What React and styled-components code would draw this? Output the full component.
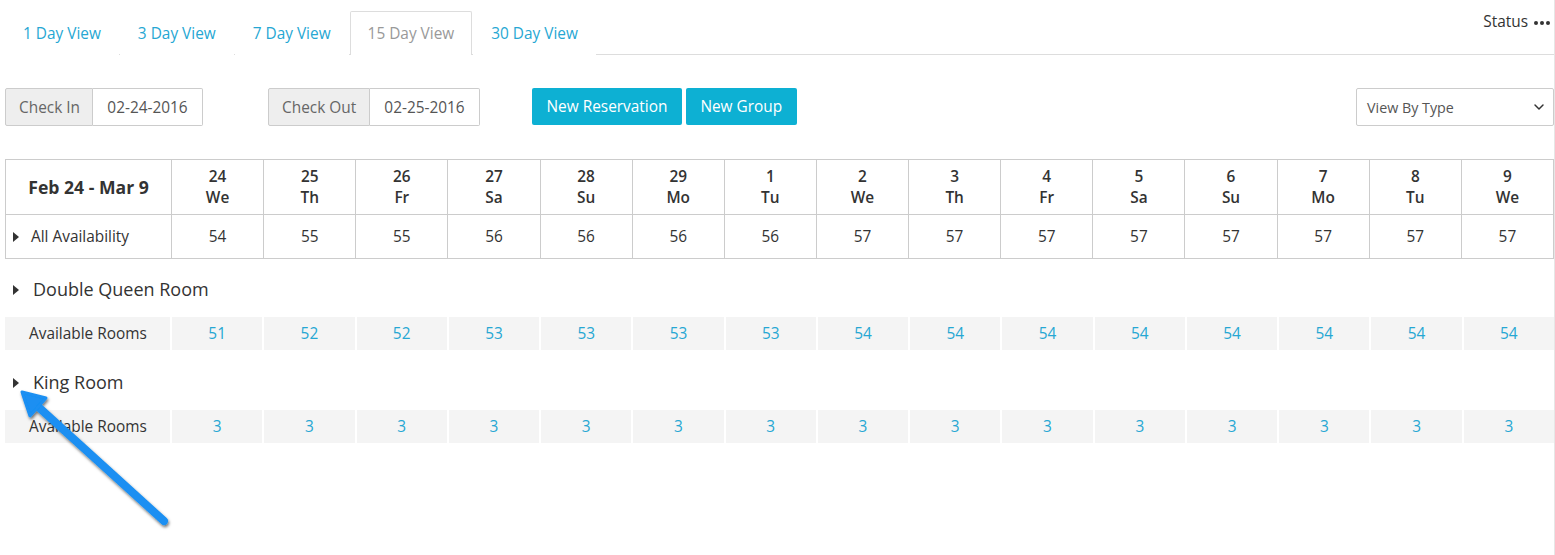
import React, { useState } from 'react';
import styled, { createGlobalStyle } from 'styled-components';
import { ChevronDown } from 'lucide-react';

const GlobalStyle = createGlobalStyle`
  html, body {
    margin: 0;
    padding: 0;
    background: #fff;
  }
  body {
    font-family: "Open Sans", "Liberation Sans", sans-serif;
    font-size: 15.4px;
    color: #333;
  }
`;

const days = [
  { d: 24, w: 'We', all: 54, dq: 51, k: 3 },
  { d: 25, w: 'Th', all: 55, dq: 52, k: 3 },
  { d: 26, w: 'Fr', all: 55, dq: 52, k: 3 },
  { d: 27, w: 'Sa', all: 56, dq: 53, k: 3 },
  { d: 28, w: 'Su', all: 56, dq: 53, k: 3 },
  { d: 29, w: 'Mo', all: 56, dq: 53, k: 3 },
  { d: 1, w: 'Tu', all: 56, dq: 53, k: 3 },
  { d: 2, w: 'We', all: 57, dq: 54, k: 3 },
  { d: 3, w: 'Th', all: 57, dq: 54, k: 3 },
  { d: 4, w: 'Fr', all: 57, dq: 54, k: 3 },
  { d: 5, w: 'Sa', all: 57, dq: 54, k: 3 },
  { d: 6, w: 'Su', all: 57, dq: 54, k: 3 },
  { d: 7, w: 'Mo', all: 57, dq: 54, k: 3 },
  { d: 8, w: 'Tu', all: 57, dq: 54, k: 3 },
  { d: 9, w: 'We', all: 57, dq: 54, k: 3 },
];

const tabs = ['1 Day View', '3 Day View', '7 Day View', '15 Day View', '30 Day View'];

const Page = styled.div`
  position: relative;
  width: 1555px;
  height: 555px;
  box-sizing: border-box;
  border-right: 1px solid #e6e6e6;
  padding: 11px 0 0 5px;
  overflow: hidden;
`;

const TabBar = styled.div`
  display: flex;
  align-items: flex-end;
  border-bottom: 1px solid #ddd;
  height: 43px;
`;

const Tab = styled.div`
  height: 44px;
  box-sizing: border-box;
  padding: 0 17px;
  margin-right: 1px;
  margin-bottom: -1px;
  display: flex;
  align-items: center;
  font-size: 15.4px;
  cursor: pointer;
  color: ${(p) => (p.active ? '#999' : '#26a7d3')};
  border: 1px solid ${(p) => (p.active ? '#ddd' : 'transparent')};
  border-bottom: none;
  background: #fff;
  border-radius: 2px 2px 0 0;
`;

const StatusMenu = styled.div`
  margin-left: auto;
  align-self: flex-start;
  display: flex;
  align-items: center;
  gap: 6px;
  font-size: 15.4px;
  color: #333;
  padding-right: 4px;
`;

const Dots = styled.span`
  display: flex;
  gap: 2px;
  margin-top: 2px;
`;

const Dot = styled.span`
  width: 4px;
  height: 4px;
  border-radius: 50%;
  background: #333;
`;

const Toolbar = styled.div`
  display: flex;
  align-items: center;
  margin-top: 33px;
  height: 38px;
`;

const InputGroup = styled.div`
  display: flex;
  height: 38px;
  margin-right: ${(p) => p.gap}px;
`;

const Addon = styled.div`
  display: flex;
  align-items: center;
  box-sizing: border-box;
  width: ${(p) => p.w}px;
  padding-left: 13px;
  background: #eee;
  border: 1px solid #ccc;
  border-radius: 2px 0 0 2px;
  color: #666;
  font-size: 15.4px;
`;

const DateInput = styled.div`
  display: flex;
  align-items: center;
  justify-content: center;
  box-sizing: border-box;
  width: 110px;
  border: 1px solid #ccc;
  border-left: none;
  border-radius: 0 2px 2px 0;
  color: #555;
  font-size: 15.4px;
`;

const PrimaryButton = styled.button`
  height: 37px;
  margin-top: -1px;
  padding: 0 14.5px;
  margin-right: 4px;
  border: none;
  border-radius: 2px;
  background: #0db0d3;
  color: #fff;
  font-family: inherit;
  font-size: 15.4px;
  cursor: pointer;
`;

const SelectBox = styled.div`
  margin-left: auto;
  width: 198px;
  height: 38px;
  box-sizing: border-box;
  border: 1px solid #ccc;
  border-radius: 2px;
  display: flex;
  align-items: center;
  justify-content: space-between;
  padding: 0 6px 0 10px;
  font-size: 14.3px;
  color: #555;
`;

const GRID = '165px repeat(15, 1fr)';

const SummaryGrid = styled.div`
  display: grid;
  grid-template-columns: ${GRID};
  gap: 1px;
  background: #ccc;
  border: 1px solid #ccc;
  margin-top: 33px;
`;

const HeadCell = styled.div`
  background: #fff;
  height: 54px;
  display: flex;
  flex-direction: column;
  align-items: center;
  justify-content: center;
  font-size: 15.4px;
  font-weight: 600;
  line-height: 21px;
  color: #333;
`;

const RangeCell = styled(HeadCell)`
  font-size: 17.6px;
  font-weight: 700;
`;

const BodyCell = styled.div`
  background: #fff;
  height: 43px;
  display: flex;
  align-items: center;
  justify-content: ${(p) => (p.left ? 'flex-start' : 'center')};
  padding-left: ${(p) => (p.left ? '7px' : '0')};
  gap: 12px;
  font-size: 15.4px;
  color: #333;
`;

const Caret = styled.span`
  width: 0;
  height: 0;
  border-top: 5px solid transparent;
  border-bottom: 5px solid transparent;
  border-left: 6px solid #333;
  display: inline-block;
  margin-top: 1px;
`;

const RoomHeader = styled.div`
  display: flex;
  align-items: center;
  gap: 14px;
  height: 56px;
  padding-left: 8px;
  font-size: 18px;
  color: #333;
`;

const RoomGrid = styled.div`
  display: grid;
  grid-template-columns: ${GRID};
  column-gap: 2px;
  height: 33px;
`;

const RoomCell = styled.div`
  background: #f4f4f4;
  display: flex;
  align-items: center;
  justify-content: ${(p) => (p.left ? 'flex-start' : 'center')};
  padding-left: ${(p) => (p.left ? '24px' : '0')};
  font-size: 15.4px;
  color: ${(p) => (p.left ? '#333' : '#26a7d3')};
`;

const RoomSection = styled.div`
  margin-top: ${(p) => p.top}px;
`;

const ArrowLayer = styled.svg`
  position: absolute;
  left: 0;
  top: 0;
  pointer-events: none;
`;

const Room = ({ name, field, top }) => (
  <RoomSection top={top}>
    <RoomHeader>
      <Caret />
      {name}
    </RoomHeader>
    <RoomGrid>
      <RoomCell left>Available Rooms</RoomCell>
      {days.map((d, i) => (
        <RoomCell key={i}>{d[field]}</RoomCell>
      ))}
    </RoomGrid>
  </RoomSection>
);

export default function App() {
  const [active, setActive] = useState('15 Day View');

  return (
    <>
      <GlobalStyle />
      <Page>
        <TabBar>
          {tabs.map((t) => (
            <Tab key={t} active={t === active} onClick={() => setActive(t)}>
              {t}
            </Tab>
          ))}
          <StatusMenu>
            Status
            <Dots>
              <Dot />
              <Dot />
              <Dot />
            </Dots>
          </StatusMenu>
        </TabBar>

        <Toolbar>
          <InputGroup gap={65}>
            <Addon w={88}>Check In</Addon>
            <DateInput>02-24-2016</DateInput>
          </InputGroup>
          <InputGroup gap={52}>
            <Addon w={102}>Check Out</Addon>
            <DateInput>02-25-2016</DateInput>
          </InputGroup>
          <PrimaryButton>New Reservation</PrimaryButton>
          <PrimaryButton>New Group</PrimaryButton>
          <SelectBox>
            View By Type
            <ChevronDown size={16} strokeWidth={2.2} color="#333" />
          </SelectBox>
        </Toolbar>

        <SummaryGrid>
          <RangeCell>Feb 24 - Mar 9</RangeCell>
          {days.map((d, i) => (
            <HeadCell key={i}>
              <span>{d.d}</span>
              <span>{d.w}</span>
            </HeadCell>
          ))}
          <BodyCell left>
            <Caret />
            All Availability
          </BodyCell>
          {days.map((d, i) => (
            <BodyCell key={i}>{d.all}</BodyCell>
          ))}
        </SummaryGrid>

        <Room name="Double Queen Room" field="dq" top={2} />
        <Room name="King Room" field="k" top={4} />

        <ArrowLayer width="1555" height="555" viewBox="0 0 1555 555">
          <defs>
            <filter id="shadow" x="-20%" y="-20%" width="140%" height="140%">
              <feDropShadow dx="1" dy="2" stdDeviation="1.5" floodColor="#000" floodOpacity="0.55" />
            </filter>
          </defs>
          <g filter="url(#shadow)">
            <line x1="164" y1="521" x2="34" y2="403" stroke="#1a8ff2" strokeWidth="8" strokeLinecap="round" />
            <polygon points="22,392 46,398 30,416" fill="#1a8ff2" stroke="#1a8ff2" strokeWidth="3" strokeLinejoin="round" />
          </g>
        </ArrowLayer>
      </Page>
    </>
  );
}
